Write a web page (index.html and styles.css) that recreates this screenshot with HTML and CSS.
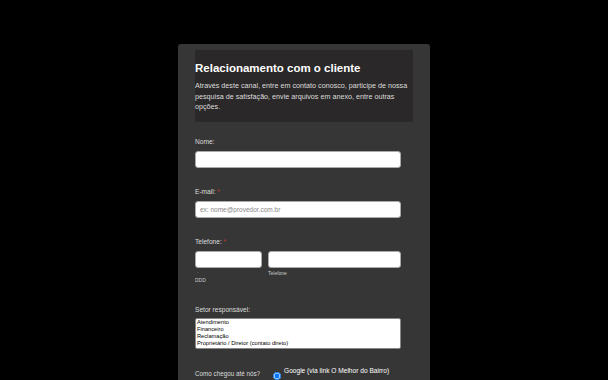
FILE: index.html
```html
<!DOCTYPE html>
<html lang="pt-BR">
<head>
    <meta charset="UTF-8">
    <meta name="viewport" content="width=device-width, initial-scale=1.0">
    <title>Relacionamento com o cliente</title>
    <link rel="stylesheet" href="styles.css">
</head>
<body>
    <div class="form">
        <div class="header">
            <h1>Relacionamento com o cliente</h1>
            <p>Através deste canal, entre em contato conosco, participe de nossa pesquisa de satisfação, envie arquivos em anexo, entre outras opções.</p>
        </div>

        <div class="field">
            <label>Nome:</label>
            <input type="text" class="input">
        </div>

        <div class="field">
            <label>E-mail: <span class="req">*</span></label>
            <input type="text" class="input" placeholder="ex: nome@provedor.com.br">
        </div>

        <div class="field">
            <label>Telefone: <span class="req">*</span></label>
            <div class="phone">
                <div class="ddd">
                    <input type="text" class="input">
                    <span class="dash">-</span>
                    <span class="sub">DDD</span>
                </div>
                <div class="number">
                    <input type="text" class="input">
                    <span class="sub">Telefone</span>
                </div>
            </div>
        </div>

        <div class="field setor">
            <label>Setor responsável:</label>
            <select class="list" size="4">
                <option>Atendimento</option>
                <option>Financeiro</option>
                <option>Reclamação</option>
                <option>Proprietário / Diretor (contato direto)</option>
            </select>
        </div>

        <div class="field origem">
            <label>Como chegou até nós?</label>
            <div class="options">
                <div class="option">
                    <input type="radio" name="origem" checked>
                    <span>Google (via link O Melhor do Bairro)</span>
                </div>
            </div>
        </div>
    </div>
</body>
</html>
```

FILE: styles.css
```css
body {
    margin: 0;
    background: #000;
    font-family: 'Liberation Sans', Arial, sans-serif;
    color: #fff;
    height: 380px;
    overflow: hidden;
}

.form {
    width: 218px;
    margin: 44px auto 0;
    padding: 6px 17px 40px;
    background: #363636;
    border-radius: 3px;
}

.header {
    background: #2a2828;
    padding: 10px 0 9px;
}

.header h1 {
    margin: 0;
    font-size: 11.5px;
    line-height: 16px;
}

.header p {
    margin: 5px 0 0;
    font-size: 7.2px;
    line-height: 10.5px;
    color: #ddd;
}

.field {
    margin-top: 15px;
    width: 206px;
}

.field + .field {
    margin-top: 19px;
}

.field label {
    display: block;
    font-size: 6.6px;
    line-height: 9px;
    color: #ddd;
}

.req {
    color: #c0392b;
}

.input {
    display: block;
    box-sizing: border-box;
    width: 206px;
    height: 17px;
    margin: 5px 0 0;
    padding: 0 4px;
    border: 1px solid #aaa;
    border-radius: 3px;
    background: #fff;
    font-family: inherit;
    font-size: 6.5px;
}

.input::placeholder {
    color: #888;
}

.phone {
    display: flex;
    gap: 6px;
}

.ddd .input {
    width: 67px;
}

.number .input {
    width: 133px;
}

.sub {
    display: block;
    font-size: 5px;
    line-height: 6px;
    color: #ccc;
    margin-top: 2px;
}

.dash {
    display: block;
    font-size: 5px;
    line-height: 4px;
    color: #888;
    margin: 2px 0 0 2px;
}

.ddd .sub {
    margin-top: 3px;
}

.setor {
    margin-top: 22px !important;
}

.list {
    display: block;
    box-sizing: border-box;
    width: 206px;
    height: 31px;
    margin-top: 4px;
    padding: 0 1px;
    border: 1px solid #888;
    background: #fff;
    font-family: inherit;
    font-size: 5.7px;
    overflow: hidden;
}

.list option {
    padding: 0;
    line-height: 7.3px;
    min-height: 7.3px;
    color: #000;
}

.origem {
    margin-top: 17px !important;
    display: flex;
}

.origem label {
    font-size: 6.3px;
    width: 78px;
    margin-top: 3px;
}

.option {
    display: flex;
    gap: 3px;
}

.option input {
    margin: 6px 0 0;
    width: 8px;
    height: 8px;
}

.option span {
    font-size: 6.6px;
    line-height: 9px;
}
```
